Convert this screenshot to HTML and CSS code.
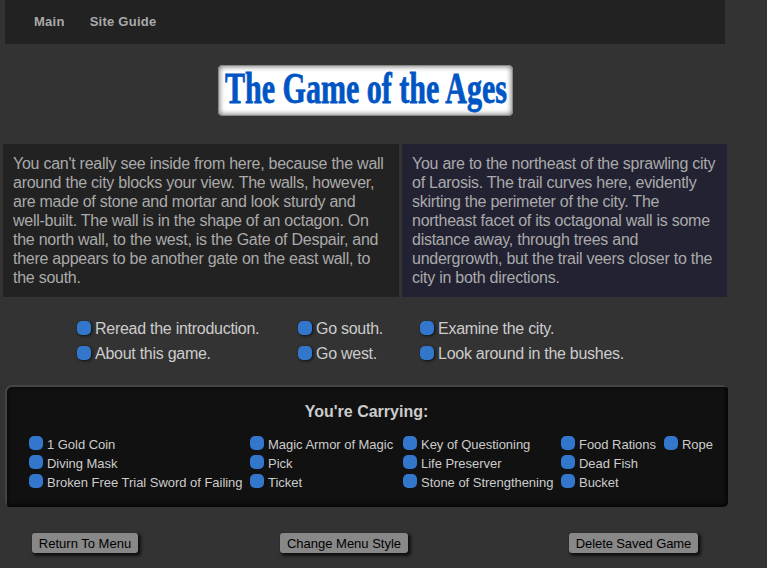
FILE: index.html
```html
<!DOCTYPE html>
<html lang="en">
<head>
<meta charset="utf-8">
<title>The Game of the Ages</title>
<link rel="stylesheet" href="styles.css">
</head>
<body>
<nav class="nav"><a>Main</a><a>Site Guide</a></nav>
<h1 class="logo">
<svg width="295" height="51" viewBox="0 0 295 51"><text class="logo-text" x="7" y="38" textLength="282" lengthAdjust="spacingAndGlyphs">The Game of the Ages</text></svg>
</h1>
<main class="story">
<p class="scene">You can't really see inside from here, because the wall<br>around the city blocks your view. The walls, however,<br>are made of stone and mortar and look sturdy and<br>well-built. The wall is in the shape of an octagon. On<br>the north wall, to the west, is the Gate of Despair, and<br>there appears to be another gate on the east wall, to<br>the south.</p>
<p class="scene place">You are to the northeast of the sprawling city<br>of Larosis. The trail curves here, evidently<br>skirting the perimeter of the city. The<br>northeast facet of its octagonal wall is some<br>distance away, through trees and<br>undergrowth, but the trail veers closer to the<br>city in both directions.</p>
</main>
<div class="choices">
<a class="item">Reread the introduction.</a><a class="item">Go south.</a><a class="item">Examine the city.</a>
<a class="item">About this game.</a><a class="item">Go west.</a><a class="item">Look around in the bushes.</a>
</div>
<section class="inventory">
<h2>You're Carrying:</h2>
<div class="goods">
<a class="item">1 Gold Coin</a><a class="item">Magic Armor of Magic</a><a class="item">Key of Questioning</a><a class="item">Food Rations</a><a class="item">Rope</a>
<a class="item">Diving Mask</a><a class="item">Pick</a><a class="item">Life Preserver</a><a class="item">Dead Fish</a><span></span>
<a class="item">Broken Free Trial Sword of Failing</a><a class="item">Ticket</a><a class="item">Stone of Strengthening</a><a class="item">Bucket</a>
</div>
</section>
<div class="actions">
<button class="return">Return To Menu</button><button class="style">Change Menu Style</button><button class="delete">Delete Saved Game</button>
</div>
</body>
</html>
```
FILE: styles.css
```css
* { box-sizing: border-box; }
body {
  margin: 0;
  height: 568px;
  overflow: hidden;
  background: #333;
  color: #ccc;
  font-family: "Liberation Sans", Arial, sans-serif;
  font-size: 16px;
  white-space: nowrap;
}
.nav {
  display: flex;
  gap: 25px;
  width: 720px;
  height: 44px;
  margin-left: 5px;
  padding: 14px 29px;
  background: #222;
  color: #aaa;
  font-size: 13px;
  font-weight: bold;
  letter-spacing: .25px;
  line-height: 15px;
}
.logo {
  width: 295px;
  height: 51px;
  margin: 21px 0 0 218px;
  border-radius: 5px;
  background: #fff;
  box-shadow: inset 0 0 0 1px #888, inset 0 0 5px 2px #888;
}
.logo svg { display: block; overflow: visible; }
.logo-text {
  fill: #0055c4;
  stroke: #0055c4;
  stroke-width: .8px;
  font: bold 44px "Liberation Serif", serif;
}
.story {
  display: grid;
  grid-template-columns: 396px 325px;
  gap: 3px;
  margin: 28px 0 0 3px;
  letter-spacing: -.26px;
}
.scene {
  height: 153px;
  margin: 0;
  padding: 10px;
  background: #222;
  color: #aaa;
  line-height: 19px;
}
.place { background: #223; }
.choices {
  display: grid;
  grid-template-columns: 221px 122px 220px;
  grid-auto-rows: 25px;
  margin: 19px 0 0 77px;
  letter-spacing: -.27px;
  line-height: 25px;
}
.item { display: flex; gap: 4px; }
.item::before {
  content: "";
  width: 14px;
  height: 14px;
  margin-top: 5px;
  border-radius: 5px;
  background: #37c;
  box-shadow: 1px 1px 3px #111;
}
.inventory {
  width: 723px;
  height: 122px;
  margin: 19px 0 0 5px;
  padding-top: 17px;
  border-radius: 5px;
  background: #111;
  box-shadow: inset 2px 2px 0 #444, inset 0 0 5px 1px #000;
}
.inventory h2 {
  margin: 0;
  font-size: 16px;
  line-height: 20px;
  text-align: center;
}
.goods {
  display: grid;
  grid-template-columns: 221px 153px 158px 103px 50px;
  grid-auto-rows: 19px;
  margin: 13px 0 0 24px;
  font-size: 13px;
  letter-spacing: -.03px;
  line-height: 19px;
}
.goods .item::before {
  margin-top: 1px;
  box-shadow: none;
}
.actions {
  display: flex;
  margin: 26px 0 0 32px;
}
button {
  height: 20px;
  margin: 0;
  padding: 1px 0 0;
  border: 0;
  border-radius: 3px;
  background: #888;
  box-shadow: 2px 2px 3px 1px #111;
  color: #000;
  font: 13px/19px "Liberation Sans", Arial, sans-serif;
}
.return { width: 106px; margin-right: 142px; }
.style { width: 128px; margin-right: 161px; }
.delete { width: 129px; letter-spacing: -.1px; }
```
